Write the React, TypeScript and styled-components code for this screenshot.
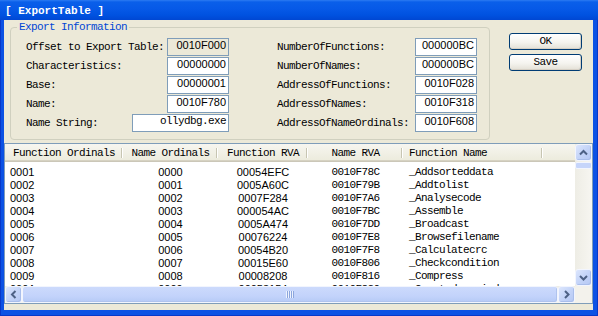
import React from "react";
import styled, { createGlobalStyle } from "styled-components";

const MONO = `"Liberation Mono", "DejaVu Sans Mono", monospace`;
const SANS = `"Liberation Sans", Arial, sans-serif`;

const GlobalStyle = createGlobalStyle`
  * { box-sizing: border-box; }
  html, body { margin: 0; padding: 0; }
  body { width: 598px; height: 316px; overflow: hidden; background: #0A4BDC; }
`;

const Window = styled.div`
  width: 598px;
  height: 316px;
  display: flex;
  flex-direction: column;
  overflow: hidden;
`;

const TitleBar = styled.div`
  height: 20px;
  flex: none;
  display: flex;
  align-items: center;
  padding: 1px 0 0 5px;
  background: linear-gradient(180deg, #2C7BF2 0px, #0A5FEA 2px, #0659E7 9px, #0052E0 15px, #0047D3 20px);
  color: #fff;
  font: bold 11px ${MONO};
  white-space: pre;
`;

const Frame = styled.div`
  flex: 1;
  display: flex;
  padding: 0 5px 6px 4px;
  background: #0C52E4;
  box-shadow: inset 1px 0 #0838C9, inset -1px 0 #0838C9, inset 0 -1px #0838C9;
`;

const Panel = styled.div`
  flex: 1;
  display: flex;
  flex-direction: column;
  background: #ECE9D8;
`;

const Top = styled.div`
  height: 123px;
  flex: none;
  display: flex;
  gap: 19px;
  padding: 2px 0 0 6px;
`;

const Group = styled.fieldset`
  margin: 0;
  width: 480px;
  height: 118px;
  padding: 6px 12px 7px 6px;
  border: 1px solid #D0D0BF;
  border-radius: 4px;
  min-width: 0;
`;

const Legend = styled.legend`
  padding: 0 2px;
  font: 11px ${MONO};
  letter-spacing: -0.6px;
  line-height: 10px;
  color: #0046D5;
`;

const Columns = styled.div`
  display: flex;
  gap: 48px;
  margin-left: 9px;
`;

const Column = styled.div<{ $w: number }>`
  width: ${(p) => p.$w}px;
  display: flex;
  flex-direction: column;
  gap: 1px;
`;

const FieldRow = styled.div`
  height: 18px;
  display: flex;
  align-items: center;
  justify-content: space-between;
`;

const Label = styled.span`
  font: 11px ${MONO};
  letter-spacing: -0.6px;
  color: #000;
  white-space: pre;
`;

const Field = styled.div<{ $w?: number; $ro?: boolean; $mono?: boolean }>`
  width: ${(p) => p.$w ?? 62}px;
  height: 18px;
  border: 1px solid #7F9DB9;
  background: ${(p) => (p.$ro ? "#ECE9D8" : "#FFFFFF")};
  text-align: right;
  padding-right: 2px;
  line-height: 16px;
  font: ${(p) => (p.$mono ? `11px ${MONO}` : `11px ${SANS}`)};
  letter-spacing: ${(p) => (p.$mono ? "-0.6px" : "0")};
  color: #000;
  white-space: pre;
`;

const Buttons = styled.div`
  display: flex;
  flex-direction: column;
  gap: 4px;
  padding-top: 11px;
`;

const Button = styled.button`
  width: 73px;
  height: 17px;
  padding: 0;
  border: 1px solid #003C74;
  border-radius: 3px;
  background: linear-gradient(180deg, #FFFFFF 0%, #F5F4EF 55%, #E3E0D6 100%);
  box-shadow: inset -1px -1px #D6D0C5;
  font: 11px ${MONO};
  letter-spacing: -0.6px;
  line-height: 15px;
  color: #000;
`;

const ListBox = styled.div`
  height: 161px;
  flex: none;
  border: 1px solid #7F9DB9;
  display: grid;
  grid-template-columns: 1fr 17px;
  grid-template-rows: 1fr 17px;
  background: #fff;
`;

const ListContent = styled.div`
  grid-area: 1 / 1;
  overflow: hidden;
  display: flex;
  flex-direction: column;
  background: #fff;
`;

const Header = styled.div`
  height: 18px;
  flex: none;
  display: flex;
  background: linear-gradient(180deg, #F7F6F0 0%, #EBEADB 100%);
  box-shadow: inset 0 -1px #CBC7B8, inset 0 -2px #D6D2C2;
`;

const HeaderCell = styled.div<{ $w: number; $align?: string; $pad?: number }>`
  width: ${(p) => p.$w}px;
  flex: none;
  padding: 2px 0 0 ${(p) => p.$pad ?? 0}px;
  text-align: ${(p) => p.$align ?? "center"};
  font: 11px ${MONO};
  letter-spacing: -0.6px;
  line-height: 14px;
  color: #000;
  white-space: pre;
  background: linear-gradient(#C7C5B2, #C7C5B2) right 1px top 4px / 1px 10px no-repeat,
    linear-gradient(#FFFFFF, #FFFFFF) right 0 top 4px / 1px 10px no-repeat;
`;

const Rows = styled.div`
  padding-top: 4px;
  display: flex;
  flex-direction: column;
`;

const Row = styled.div`
  height: 13px;
  flex: none;
  display: flex;
  align-items: center;
`;

const Cell = styled.div<{ $w: number; $align?: string; $pad?: number; $mono?: boolean }>`
  width: ${(p) => p.$w}px;
  flex: none;
  padding-left: ${(p) => p.$pad ?? 0}px;
  text-align: ${(p) => p.$align ?? "center"};
  font: ${(p) => (p.$mono ? `11px ${MONO}` : `11px ${SANS}`)};
  letter-spacing: ${(p) => (p.$mono ? "-0.6px" : "0")};
  line-height: 13px;
  color: #000;
  white-space: pre;
`;

const VScroll = styled.div`
  grid-area: 1 / 2;
  display: flex;
  flex-direction: column;
  background: linear-gradient(90deg, #EEEDE5 0%, #F7F6F1 100%);
`;

const HScroll = styled.div`
  grid-area: 2 / 1;
  display: flex;
  background: linear-gradient(180deg, #EEEDE5 0%, #F7F6F1 100%);
`;

const Corner = styled.div`
  grid-area: 2 / 2;
  background: #F3F2EC;
`;

const ScrollBtn = styled.div`
  width: 17px;
  height: 17px;
  flex: none;
  display: flex;
  align-items: center;
  justify-content: center;
  border: 1px solid #F2F5FE;
  border-radius: 3px;
  background: linear-gradient(135deg, #DCE6FD 0%, #C4D4F8 50%, #B5C8F4 100%);
  box-shadow: inset -1px -1px #A9BEEB;
`;

const VThumb = styled.div`
  height: 7px;
  flex: none;
  margin: 1px 0 0;
  border: 1px solid #F2F5FE;
  border-radius: 2px;
  background: #C6D5FA;
`;

const Track = styled.div`
  flex: 1;
`;

const HThumb = styled.div`
  flex: 1;
  display: flex;
  align-items: center;
  justify-content: center;
  border: 1px solid #F2F5FE;
  border-radius: 3px;
  background: linear-gradient(180deg, #CCDAFC 0%, #C3D3FB 60%, #B6CAF6 100%);
  box-shadow: inset -1px -1px #AFC3EE;
`;

const Gripper = styled.div`
  width: 8px;
  height: 7px;
  background: repeating-linear-gradient(90deg, #EEF3FE 0 1px, #8CA6DD 1px 2px);
`;

const Chevron = ({ dir }: { dir: "up" | "down" | "left" | "right" }) => {
  const pts = {
    up: "4,9.5 7.5,6 11,9.5",
    down: "4,6 7.5,9.5 11,6",
    left: "9.5,4 6,7.5 9.5,11",
    right: "6,4 9.5,7.5 6,11",
  }[dir];
  return (
    <svg width="15" height="15" viewBox="0 0 15 15">
      <polyline points={pts} fill="none" stroke="#4D6185" strokeWidth="2" />
    </svg>
  );
};

const COLS = [
  { w: 118, align: "left", pad: 5, hpad: 8, mono: false },
  { w: 95, align: "center", pad: 0, hpad: 0, mono: false },
  { w: 90, align: "center", pad: 0, hpad: 0, mono: false },
  { w: 95, align: "center", pad: 0, hpad: 0, mono: true },
  { w: 140, align: "left", pad: 6, hpad: 6, mono: true },
];

const HEADERS = ["Function Ordinals", "Name Ordinals", "Function RVA", "Name RVA", "Function Name"];

const DATA = [
  ["0001", "0000", "00054EFC", "0010F78C", "_Addsorteddata"],
  ["0002", "0001", "0005A60C", "0010F79B", "_Addtolist"],
  ["0003", "0002", "0007F284", "0010F7A6", "_Analysecode"],
  ["0004", "0003", "000054AC", "0010F7BC", "_Assemble"],
  ["0005", "0004", "0005A474", "0010F7DD", "_Broadcast"],
  ["0006", "0005", "00076224", "0010F7E8", "_Browsefilename"],
  ["0007", "0006", "00054B20", "0010F7F8", "_Calculatecrc"],
  ["0008", "0007", "00015E60", "0010F806", "_Checkcondition"],
  ["0009", "0008", "00008208", "0010F816", "_Compress"],
  ["000A", "0009", "00053154", "0010F820", "_Createdumpwindow"],
];

const LEFT = [
  { label: "Offset to Export Table:", value: "0010F000", ro: true },
  { label: "Characteristics:", value: "00000000" },
  { label: "Base:", value: "00000001" },
  { label: "Name:", value: "0010F780" },
  { label: "Name String:", value: "ollydbg.exe", w: 97, mono: true },
];

const RIGHT = [
  { label: "NumberOfFunctions:", value: "000000BC" },
  { label: "NumberOfNames:", value: "000000BC" },
  { label: "AddressOfFunctions:", value: "0010F028" },
  { label: "AddressOfNames:", value: "0010F318" },
  { label: "AddressOfNameOrdinals:", value: "0010F608" },
];

type FieldDef = { label: string; value: string; ro?: boolean; w?: number; mono?: boolean };

const FieldColumn = ({ items, w }: { items: FieldDef[]; w: number }) => (
  <Column $w={w}>
    {items.map((f) => (
      <FieldRow key={f.label}>
        <Label>{f.label}</Label>
        <Field $w={f.w} $ro={f.ro} $mono={f.mono}>
          {f.value}
        </Field>
      </FieldRow>
    ))}
  </Column>
);

export default function App() {
  return (
    <>
      <GlobalStyle />
      <Window>
        <TitleBar>[ ExportTable ]</TitleBar>
        <Frame>
          <Panel>
            <Top>
              <Group>
                <Legend>Export Information</Legend>
                <Columns>
                  <FieldColumn items={LEFT} w={203} />
                  <FieldColumn items={RIGHT} w={200} />
                </Columns>
              </Group>
              <Buttons>
                <Button>OK</Button>
                <Button>Save</Button>
              </Buttons>
            </Top>
            <ListBox>
              <ListContent>
                <Header>
                  {HEADERS.map((h, i) => (
                    <HeaderCell
                      key={h}
                      $w={COLS[i].w}
                      $align={i === 0 || i === 4 ? "left" : "center"}
                      $pad={COLS[i].hpad}
                    >
                      {h}
                    </HeaderCell>
                  ))}
                </Header>
                <Rows>
                  {DATA.map((r) => (
                    <Row key={r[0]}>
                      {r.map((v, i) => (
                        <Cell
                          key={i}
                          $w={COLS[i].w}
                          $align={COLS[i].align}
                          $pad={COLS[i].pad}
                          $mono={COLS[i].mono}
                        >
                          {v}
                        </Cell>
                      ))}
                    </Row>
                  ))}
                </Rows>
              </ListContent>
              <VScroll>
                <ScrollBtn>
                  <Chevron dir="up" />
                </ScrollBtn>
                <VThumb />
                <Track />
                <ScrollBtn>
                  <Chevron dir="down" />
                </ScrollBtn>
              </VScroll>
              <HScroll>
                <ScrollBtn>
                  <Chevron dir="left" />
                </ScrollBtn>
                <HThumb>
                  <Gripper />
                </HThumb>
                <ScrollBtn>
                  <Chevron dir="right" />
                </ScrollBtn>
              </HScroll>
              <Corner />
            </ListBox>
          </Panel>
        </Frame>
      </Window>
    </>
  );
}
